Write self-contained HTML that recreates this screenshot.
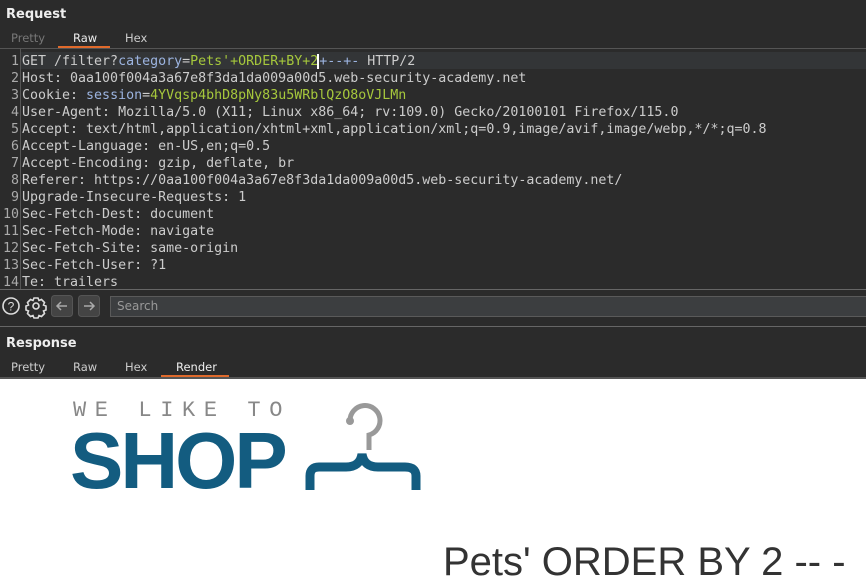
<!DOCTYPE html>
<html><head><meta charset="utf-8"><style>
*{margin:0;padding:0;box-sizing:border-box}
body{width:866px;height:586px;overflow:hidden;background:#2b2b2b;font-family:"DejaVu Sans","Liberation Sans",sans-serif;color:#ddd;position:relative}
.abs{position:absolute}
.h{font-weight:bold;font-size:13px;color:#eee}
.tab{font-size:11.5px;color:#ccc;position:absolute}
.ed{position:absolute;left:0;top:53px;width:866px;font-family:"DejaVu Sans Mono","Liberation Mono",monospace;font-size:13.3px;line-height:17px;color:#ccc}
.ln{position:absolute;left:0;width:19px;text-align:right;color:#aaa}
.tx{position:absolute;left:22px;white-space:pre}
.b{color:#9cb4e0}.g{color:#a6c83c}
</style></head><body>
<div class="abs h" style="left:6px;top:7px">Request</div>
<div class="tab" style="left:11px;top:31px;color:#777">Pretty</div>
<div class="tab" style="left:73px;top:31px;color:#eee">Raw</div>
<div class="tab" style="left:125px;top:31px">Hex</div>
<div class="abs" style="left:58px;top:46px;width:52px;height:2px;background:#e06a2c"></div>
<div class="abs" style="left:0;top:48px;width:866px;height:1px;background:#555"></div>
<div class="abs" style="left:20px;top:49px;width:1px;height:240px;background:#555"></div>
<div class="abs" style="left:21px;top:52px;width:845px;height:17px;background:#333537"></div>
<div class="ed">
<div style="position:relative;height:17px"><span class="ln">1</span><span class="tx">GET /filter?<span class="b">category</span>=<span class="g">Pets'+ORDER+BY+2</span><span style="border-left:2px solid #fff;margin-left:-1px"></span><span class="b">+--+-</span> HTTP/2</span></div>
<div style="position:relative;height:17px"><span class="ln">2</span><span class="tx">Host: 0aa100f004a3a67e8f3da1da009a00d5.web-security-academy.net</span></div>
<div style="position:relative;height:17px"><span class="ln">3</span><span class="tx">Cookie: <span class="b">session</span>=<span class="g">4YVqsp4bhD8pNy83u5WRblQzO8oVJLMn</span></span></div>
<div style="position:relative;height:17px"><span class="ln">4</span><span class="tx">User-Agent: Mozilla/5.0 (X11; Linux x86_64; rv:109.0) Gecko/20100101 Firefox/115.0</span></div>
<div style="position:relative;height:17px"><span class="ln">5</span><span class="tx">Accept: text/html,application/xhtml+xml,application/xml;q=0.9,image/avif,image/webp,*/*;q=0.8</span></div>
<div style="position:relative;height:17px"><span class="ln">6</span><span class="tx">Accept-Language: en-US,en;q=0.5</span></div>
<div style="position:relative;height:17px"><span class="ln">7</span><span class="tx">Accept-Encoding: gzip, deflate, br</span></div>
<div style="position:relative;height:17px"><span class="ln">8</span><span class="tx">Referer: https://0aa100f004a3a67e8f3da1da009a00d5.web-security-academy.net/</span></div>
<div style="position:relative;height:17px"><span class="ln">9</span><span class="tx">Upgrade-Insecure-Requests: 1</span></div>
<div style="position:relative;height:17px"><span class="ln">10</span><span class="tx">Sec-Fetch-Dest: document</span></div>
<div style="position:relative;height:17px"><span class="ln">11</span><span class="tx">Sec-Fetch-Mode: navigate</span></div>
<div style="position:relative;height:17px"><span class="ln">12</span><span class="tx">Sec-Fetch-Site: same-origin</span></div>
<div style="position:relative;height:17px"><span class="ln">13</span><span class="tx">Sec-Fetch-User: ?1</span></div>
<div style="position:relative;height:17px"><span class="ln">14</span><span class="tx">Te: trailers</span></div>
</div>
<div class="abs" style="left:0;top:289px;width:866px;height:1px;background:#666"></div>
<svg class="abs" style="left:0;top:295px" width="110" height="24">
<circle cx="11" cy="11" r="8" fill="none" stroke="#ddd" stroke-width="1.6"/>
<text x="11" y="15.5" font-size="12" font-family="Liberation Sans" fill="#ddd" text-anchor="middle">?</text>
<g transform="translate(36 11)" fill="none" stroke="#ddd" stroke-width="1.6"><circle r="3"/><path d="M-2 -8h4l1 2.5 2.5-1 3 3-1 2.5 2.5 1v4l-2.5 1 1 2.5-3 3-2.5-1-1 2.5h-4l-1-2.5-2.5 1-3-3 1-2.5-2.5-1v-4l2.5-1-1-2.5 3-3 2.5 1z"/></g>
<rect x="51.5" y="0.5" width="21" height="21" rx="3" fill="#444" stroke="#555"/>
<path d="M67 11h-10M61 7l-4 4 4 4" stroke="#aaa" stroke-width="1.5" fill="none"/>
<rect x="78.5" y="0.5" width="21" height="21" rx="3" fill="#444" stroke="#555"/>
<path d="M84 11h10M90 7l4 4-4 4" stroke="#aaa" stroke-width="1.5" fill="none"/>
</svg>
<div class="abs" style="left:110px;top:296px;width:760px;height:21px;background:#3c3e40;border:1px solid #5a5a5a;font-size:12px;color:#999;padding:2px 6px">Search</div>
<div class="abs" style="left:0;top:326px;width:866px;height:1px;background:#666"></div>
<div class="abs h" style="left:6px;top:336px">Response</div>
<div class="tab" style="left:11px;top:360px">Pretty</div>
<div class="tab" style="left:73px;top:360px">Raw</div>
<div class="tab" style="left:125px;top:360px">Hex</div>
<div class="tab" style="left:176px;top:360px;color:#eee">Render</div>
<div class="abs" style="left:161px;top:375px;width:68px;height:2px;background:#e06a2c"></div>
<div class="abs" style="left:0;top:377px;width:866px;height:2px;background:#555"></div>
<div class="abs" style="left:0;top:379px;width:866px;height:207px;background:#fff"></div>
<div class="abs" style="left:73px;top:398px;font-family:'Liberation Mono',monospace;font-size:22px;letter-spacing:8.6px;color:#888;line-height:26px;white-space:nowrap">WE LIKE TO</div>
<div class="abs" style="left:70px;top:421px;font-family:'Liberation Sans',sans-serif;font-weight:bold;font-size:80px;color:#135c80;line-height:80px;letter-spacing:-3px;white-space:nowrap">SHOP</div>
<svg class="abs" style="left:300px;top:397px" width="130" height="98">
<path d="M50 24a15 15 0 1 1 19 14v15" fill="none" stroke="#999" stroke-width="5"/>
<circle cx="50" cy="24" r="4" fill="#999"/>
<path d="M10 93v-14q0-9 9-9h27q14 0 16-13q2 13 16 13h27q11 0 11 9v14" fill="none" stroke="#135c80" stroke-width="9"/>
</svg>
<div class="abs" style="left:443px;top:541px;font-family:'Liberation Sans',sans-serif;font-size:40px;color:#333;line-height:42px;white-space:nowrap">Pets' ORDER BY 2 -- -</div>
</body></html>
